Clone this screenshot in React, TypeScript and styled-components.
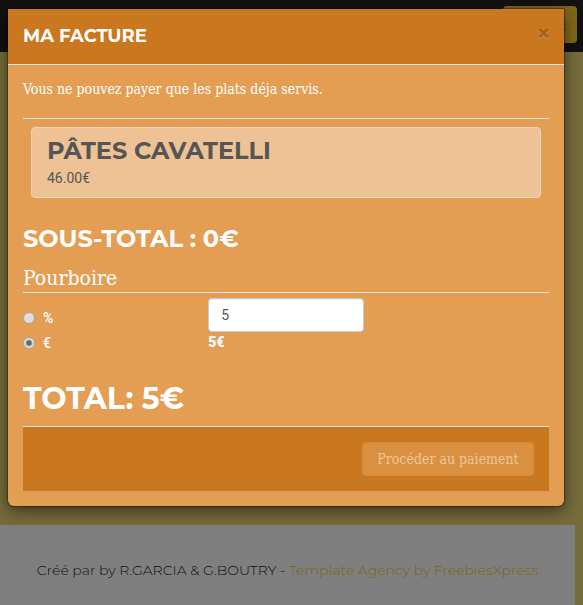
import React, { useState } from "react";
import styled, { createGlobalStyle } from "styled-components";

const slab = '"Roboto Slab", "DejaVu Serif Condensed", "DejaVu Serif", serif';
const display = 'Montserrat, Inter, sans-serif';
const numeric = 'Roboto, sans-serif';

const GlobalStyle = createGlobalStyle`
  *, *::before, *::after { box-sizing: border-box; }
  body {
    margin: 0;
    background: #ead676;
    color: #fff;
    font: 14px/20px ${slab};
  }
`;

const Page = styled.div`
  position: relative;
  display: flex;
  flex-direction: column;
  min-height: 100vh;
`;

const Navbar = styled.nav`
  display: flex;
  justify-content: flex-end;
  align-items: flex-start;
  height: 52px;
  padding: 6px;
  background: #222;
`;

const MenuButton = styled.button`
  display: flex;
  align-items: center;
  justify-content: flex-end;
  width: 74px;
  height: 37px;
  padding: 0 11px;
  border: 0;
  border-radius: 4px;
  background: #fecc2e;
  color: #a0a8a8;
`;

const Main = styled.main`
  flex: 1;
`;

const PageFooter = styled.footer`
  margin-right: 8px;
  padding: 34px 16px 24px;
  background: #fff;
  color: #222;
  font: 300 14px/22px ${display};
  text-align: center;
`;

const FooterLink = styled.a`
  color: #fdc52a;
  text-decoration: none;
`;

const Backdrop = styled.div`
  position: absolute;
  inset: 0;
  padding: 9px 19px 0 8px;
  background: rgba(0, 0, 0, 0.5);
`;

const Dialog = styled.section`
  border-radius: 0 0 6px 6px;
  background: #e39e54;
  box-shadow: 0 0 1px 1px rgba(0, 0, 0, 0.35), 0 5px 15px rgba(0, 0, 0, 0.5);
`;

const DialogHeader = styled.header`
  display: flex;
  align-items: center;
  justify-content: space-between;
  height: 56px;
  padding: 0 15px 2px;
  border-bottom: 1px solid #e5e5e5;
  background: #c97820;
`;

const Title = styled.h4`
  margin: 0;
  font: 700 18px/20px ${display};
`;

const CloseButton = styled.button`
  padding: 0 0 6px;
  border: 0;
  background: none;
  color: #a1601a;
  font: 900 21px/20px ${numeric};
  text-shadow: 0 1px 0 #d49350;
  cursor: pointer;
`;

const DialogBody = styled.div`
  padding: 14px 15px 15px;
`;

const Notice = styled.p`
  margin: 0;
  padding-bottom: 19px;
  border-bottom: 1px solid #e5e5e5;
`;

const DishList = styled.ul`
  margin: 0;
  padding: 8px;
  list-style: none;
`;

const Dish = styled.li`
  padding: 9px 15px;
  border: 1px solid #e9d6c2;
  border-radius: 4px;
  background: #eec295;
  color: #555;
`;

const DishName = styled.h3`
  margin: 0 0 3px;
  font: 700 24px/28px ${display};
`;

const DishPrice = styled.p`
  margin: 0;
  font: 14px/20px ${numeric};
`;

const Subtotal = styled.h3`
  margin: 19px 0 13px;
  font: 700 24px/28px ${display};
`;

const TipForm = styled.fieldset`
  min-width: 0;
  margin: 0;
  padding: 0;
  border: 0;
`;

const Legend = styled.legend`
  width: 100%;
  padding: 0 0 2px;
  border-bottom: 1px solid #e5e5e5;
  font-size: 21px;
  line-height: 24px;
`;

const TipGrid = styled.div`
  display: grid;
  grid-template-columns: repeat(3, 1fr);
  gap: 30px;
  padding-top: 5px;
`;

const RadioGroup = styled.div`
  padding-top: 10px;
`;

const RadioLabel = styled.label`
  display: flex;
  align-items: center;
  gap: 8px;
  height: 20px;
  margin-bottom: 5px;
  font: 500 14px/20px ${numeric};
`;

const Radio = styled.input`
  appearance: none;
  width: 12px;
  height: 12px;
  margin: 0;
  border: 1px solid #aaa49c;
  border-radius: 50%;
  background: #dedede;

  &:checked {
    background: radial-gradient(circle, #666 0 2px, #e6e6e6 4px);
  }
`;

const TipInput = styled.input`
  display: block;
  width: 100%;
  height: 34px;
  padding: 6px 12px;
  border: 1px solid #ccc;
  border-radius: 4px;
  background: #fff;
  color: #555;
  font: 14px/20px ${numeric};
  box-shadow: inset 0 1px 1px rgba(0, 0, 0, 0.08);
`;

const TipAmount = styled.output`
  display: block;
  font: 900 14px/20px ${numeric};
`;

const Total = styled.h2`
  margin: 24px 0 10px;
  font: 700 30px/34px ${display};
`;

const DialogFooter = styled.footer`
  display: flex;
  justify-content: flex-end;
  padding: 15px;
  border-top: 1px solid #e5e5e5;
  background: #c97820;
`;

const PayButton = styled.button`
  min-width: 172px;
  height: 34px;
  padding: 0 12px;
  border: 1px solid #d38a39;
  border-radius: 4px;
  background: #d99041;
  color: #eec798;
  font: 14px/20px ${slab};
`;

export default function App() {
  const [unit, setUnit] = useState("euro");
  const [tip, setTip] = useState("5");
  const amount = unit === "euro" ? Number(tip) || 0 : 0;

  return (
    <>
      <GlobalStyle />
      <Page>
        <Navbar>
          <MenuButton aria-label="Menu">
            <svg width="12" height="10" viewBox="0 0 12 10" fill="none" stroke="currentColor" strokeWidth="2">
              <path d="M0 1h12M0 5h12M0 9h12" />
            </svg>
          </MenuButton>
        </Navbar>
        <Main />
        <PageFooter>
          Créé par by R.GARCIA &amp; G.BOUTRY - <FooterLink href="#">Template Agency by FreebiesXpress</FooterLink>
        </PageFooter>
        <Backdrop>
          <Dialog role="dialog" aria-labelledby="bill-title">
            <DialogHeader>
              <Title id="bill-title">MA FACTURE</Title>
              <CloseButton aria-label="Fermer">×</CloseButton>
            </DialogHeader>
            <DialogBody>
              <Notice>Vous ne pouvez payer que les plats déja servis.</Notice>
              <DishList>
                <Dish>
                  <DishName>PÂTES CAVATELLI</DishName>
                  <DishPrice>46.00€</DishPrice>
                </Dish>
              </DishList>
              <Subtotal>SOUS-TOTAL : 0€</Subtotal>
              <TipForm>
                <Legend>Pourboire</Legend>
                <TipGrid>
                  <RadioGroup>
                    <RadioLabel>
                      <Radio type="radio" name="unit" checked={unit === "percent"} onChange={() => setUnit("percent")} />
                      %
                    </RadioLabel>
                    <RadioLabel>
                      <Radio type="radio" name="unit" checked={unit === "euro"} onChange={() => setUnit("euro")} />
                      €
                    </RadioLabel>
                  </RadioGroup>
                  <div>
                    <TipInput aria-label="Pourboire" value={tip} onChange={(e) => setTip(e.target.value)} />
                    <TipAmount>{amount}€</TipAmount>
                  </div>
                </TipGrid>
              </TipForm>
              <Total>TOTAL: {amount}€</Total>
              <DialogFooter>
                <PayButton disabled>Procéder au paiement</PayButton>
              </DialogFooter>
            </DialogBody>
          </Dialog>
        </Backdrop>
      </Page>
    </>
  );
}
